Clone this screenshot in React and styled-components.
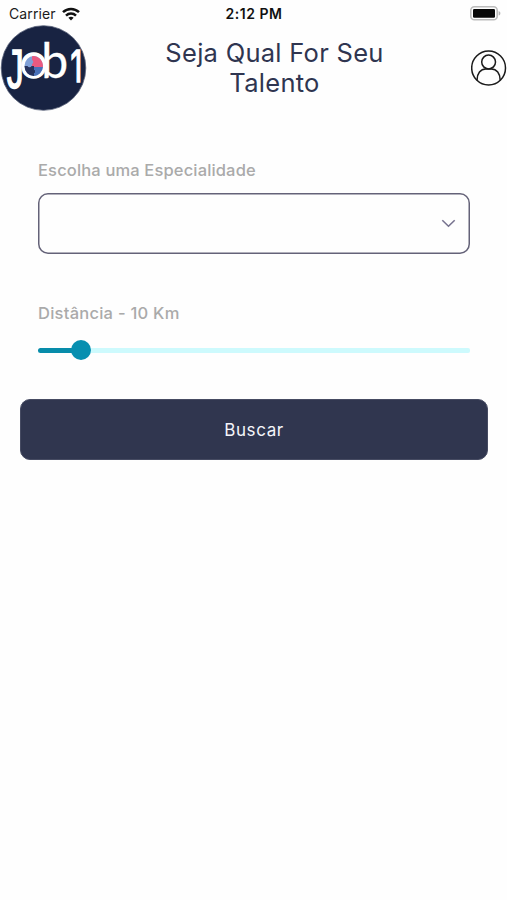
import React, { useState } from 'react';
import styled, { createGlobalStyle } from 'styled-components';

const GlobalStyle = createGlobalStyle`
    *{
        box-sizing:border-box;
    }
    body{
        margin:0;
        background:#fefefe;
        font-family:Inter, "Liberation Sans", sans-serif;
    }
`;
const Screen = styled.div`
    width:100%;
    min-height:900px;
    background:#fefefe;
`;
const StatusBar = styled.div`
    height:25px;
    display:grid;
    grid-template-columns:1fr auto 1fr;
    align-items:center;
    padding:2px 6px 0 9px;
    font-size:14px;
    color:#1c1c1c;
`;
const Carrier = styled.div`
    display:flex;
    align-items:center;
    gap:6px;
    letter-spacing:0.1px;
`;
const Clock = styled.div`
    margin-right:2px;
    font-weight:600;
    letter-spacing:0.5px;
    color:#111;
`;
const BatteryIcon = styled.svg`
    justify-self:end;
`;
const Header = styled.header`
    height:86px;
    display:flex;
    align-items:center;
    justify-content:space-between;
`;
const Logo = styled.svg`
    flex:none;
`;
const Title = styled.h1`
    width:250px;
    margin:0 9px 0 0;
    text-align:center;
    font-size:25.5px;
    line-height:30px;
    font-weight:400;
    letter-spacing:0.28px;
    color:#2f3550;
`;
const ProfileButton = styled.button`
    width:36px;
    height:36px;
    padding:0;
    border:none;
    background:none;
    display:flex;
`;
const Form = styled.main`
    padding:48px 37px 0 38px;
`;
const Label = styled.label`
    display:block;
    height:22px;
    line-height:22px;
    font-size:16.5px;
    font-weight:500;
    letter-spacing:${props => props.$spacing || "0.15px"};
    color:#aaaaaa;
`;
const Select = styled.button`
    width:100%;
    height:61px;
    margin:12px 0 48px;
    padding:0 14px 0 0;
    border:none;
    box-shadow:inset 0 0 0 1.5px #646278;
    border-radius:10px;
    background:#fefefe;
    display:flex;
    align-items:center;
    justify-content:flex-end;
`;
const Slider = styled.div`
    height:20px;
    margin-top:16px;
    display:flex;
    align-items:center;
`;
const Filled = styled.div`
    height:5px;
    border-radius:3px 0 0 3px;
    background:#078caa;
`;
const Thumb = styled.div`
    width:20px;
    height:20px;
    margin:0 -10px;
    border-radius:50%;
    background:#078fb0;
    z-index:1;
`;
const Track = styled.div`
    flex:1;
    height:5px;
    border-radius:0 2px 2px 0;
    background:#cdfafd;
`;
const Footer = styled.div`
    padding:39px 19px 0 20px;
`;
const SearchButton = styled.button`
    width:100%;
    height:61px;
    border:1px solid #464b62;
    border-radius:10px;
    background:#30364f;
    color:#f4f5fa;
    font-family:inherit;
    font-size:17px;
    font-weight:400;
    letter-spacing:0.6px;
`;

const WifiIcon = () => (
    <svg width="18" height="14" viewBox="0 0 18 14" fill="none" stroke="#111" strokeWidth="2.5">
        <path d="M1 5.2C5.5 0.8 12.5 0.8 17 5.2"/>
        <path d="M4 8.6C6.8 5.9 11.2 5.9 14 8.6"/>
        <path d="M6.4 10.7C7.9 9.4 10.1 9.4 11.6 10.7L9 13.4Z" fill="#111" stroke="none"/>
    </svg>
)

const Battery = () => (
    <BatteryIcon width="31" height="15" viewBox="0 0 31 15">
        <rect x="0.8" y="0.8" width="26.4" height="13" rx="3.6" fill="#fefefe" stroke="#bcbcbc" strokeWidth="1.6"/>
        <rect x="3" y="3" width="22" height="8.8" rx="1.2" fill="#080808"/>
        <path d="M28.6 5C31 5.8 31 8.8 28.6 9.6Z" fill="#b5b5b5"/>
    </BatteryIcon>
)

const JobLogo = () => (
    <Logo width="87" height="86" viewBox="0 0 87 86">
        <circle cx="43.5" cy="43" r="42.3" fill="#182342" stroke="#59627a" strokeWidth="0.8"/>
        <g fill="#fff" stroke="#fff">
            <text transform="translate(4.2 63.4) scale(0.62 1)" fontFamily="Liberation Mono, monospace" fontSize="57" strokeWidth="1.4">J</text>
            <text y="53" fontFamily="Lato, sans-serif" fontSize="48">
                <tspan x="19.9" strokeWidth="1.4">o</tspan>
                <tspan x="41.2" strokeWidth="0.3">b</tspan>
            </text>
            <text transform="translate(70.4 57) scale(0.66 1)" fontFamily="Inter, sans-serif" fontSize="44" strokeWidth="1.6">1</text>
        </g>
        <ellipse cx="33.7" cy="41" rx="9.2" ry="10" fill="#7f9fd6"/>
        <path d="M32 31.2A9.2 10 0 0 1 42.9 42H39.5A2.2 2.2 0 0 1 35.3 42H32V39A2.2 2.2 0 0 0 32 35Z" fill="#e95a80"/>
        <path d="M24.5 41H27.5A2.2 2.2 0 0 0 31.5 41H34V44.5A2.2 2.2 0 0 1 34 48.5V51A9.2 10 0 0 1 24.5 41Z" fill="#26325d"/>
        <path d="M34 42H42.9A9.2 10 0 0 1 34 51V48.5A2.2 2.2 0 0 0 34 44.5Z" fill="#4970b8"/>
    </Logo>
)

const UserIcon = () => (
    <svg width="36" height="36" viewBox="0 0 36 36" fill="none" stroke="#1b1b1b" strokeWidth="1.5">
        <circle cx="17.6" cy="18" r="16.9"/>
        <circle cx="17.6" cy="12" r="6.9"/>
        <path d="M6 30.2C6 23.5 9.6 19 14.8 19H20.4C25.6 19 29.2 23.5 29.2 30.2"/>
    </svg>
)

const App = () => {
    const [distance] = useState(10);
    return (
        <Screen>
            <GlobalStyle/>
            <StatusBar>
                <Carrier>Carrier <WifiIcon/></Carrier>
                <Clock>2:12 PM</Clock>
                <Battery/>
            </StatusBar>
            <Header>
                <JobLogo/>
                <Title>Seja Qual For Seu Talento</Title>
                <ProfileButton aria-label="Perfil"><UserIcon/></ProfileButton>
            </Header>
            <Form>
                <Label>Escolha uma Especialidade</Label>
                <Select aria-label="Especialidade">
                    <svg width="15" height="9" viewBox="0 0 15 9" fill="none" stroke="#77738f" strokeWidth="1.6">
                        <path d="M1.3 1.2L7.5 7.2L13.7 1.2"/>
                    </svg>
                </Select>
                <Label $spacing="0.25px">Distância - {distance} Km</Label>
                <Slider>
                    <Filled style={{width: `${distance}%`}}/>
                    <Thumb/>
                    <Track/>
                </Slider>
            </Form>
            <Footer>
                <SearchButton>Buscar</SearchButton>
            </Footer>
        </Screen>
    )
}
export default App;
